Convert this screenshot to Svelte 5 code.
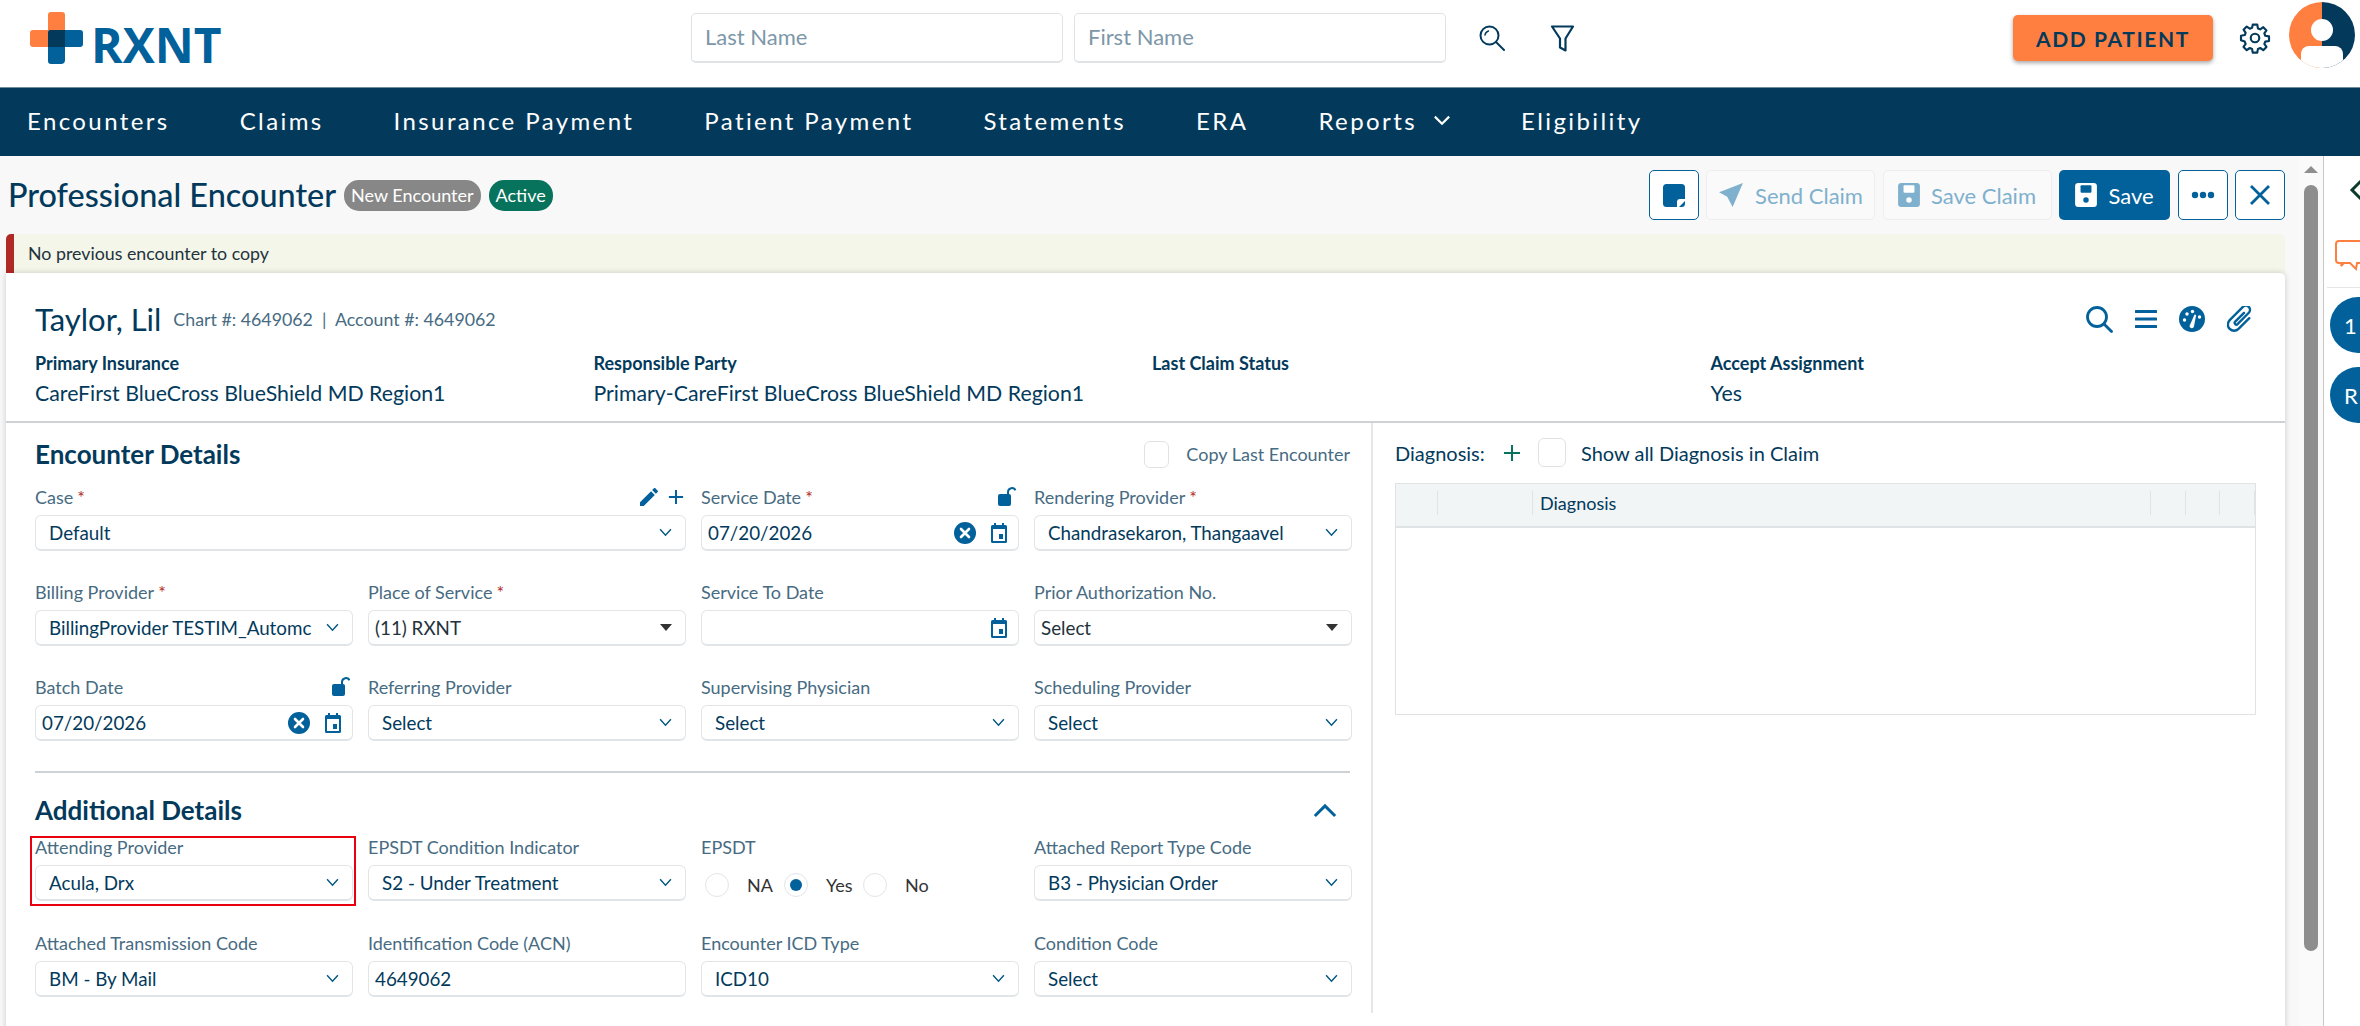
<script>
  const navItems = ['Encounters', 'Claims', 'Insurance Payment', 'Patient Payment', 'Statements', 'ERA', 'Reports', 'Eligibility'];

  const insurance = [
    { label: 'Primary Insurance', value: 'CareFirst BlueCross BlueShield MD Region1' },
    { label: 'Responsible Party', value: 'Primary-CareFirst BlueCross BlueShield MD Region1' },
    { label: 'Last Claim Status', value: '' },
    { label: 'Accept Assignment', value: 'Yes' }
  ];

  const encounterFields = [
    { label: 'Case', req: true, value: 'Default', kind: 'select', span: 2, tools: 'case' },
    { label: 'Service Date', req: true, value: '07/20/2026', kind: 'date', clear: true, lock: true },
    { label: 'Rendering Provider', req: true, value: 'Chandrasekaron, Thangaavel', kind: 'select' },
    { label: 'Billing Provider', req: true, value: 'BillingProvider TESTIM_Automc', kind: 'select' },
    { label: 'Place of Service', req: true, value: '(11) RXNT', kind: 'native' },
    { label: 'Service To Date', value: '', kind: 'date' },
    { label: 'Prior Authorization No.', value: 'Select', kind: 'native' },
    { label: 'Batch Date', value: '07/20/2026', kind: 'date', clear: true, lock: true },
    { label: 'Referring Provider', value: 'Select', kind: 'select' },
    { label: 'Supervising Physician', value: 'Select', kind: 'select' },
    { label: 'Scheduling Provider', value: 'Select', kind: 'select' }
  ];

  const additionalFields = [
    { label: 'Attending Provider', value: 'Acula, Drx', kind: 'select', flagged: true },
    { label: 'EPSDT Condition Indicator', value: 'S2 - Under Treatment', kind: 'select' },
    { label: 'EPSDT', kind: 'radio' },
    { label: 'Attached Report Type Code', value: 'B3 - Physician Order', kind: 'select' },
    { label: 'Attached Transmission Code', value: 'BM - By Mail', kind: 'select' },
    { label: 'Identification Code (ACN)', value: '4649062', kind: 'text' },
    { label: 'Encounter ICD Type', value: 'ICD10', kind: 'select' },
    { label: 'Condition Code', value: 'Select', kind: 'select' }
  ];

  const radios = [
    { label: 'NA', on: false },
    { label: 'Yes', on: true },
    { label: 'No', on: false }
  ];
</script>

{#snippet chevron()}
  <svg class="chev" viewBox="0 0 12 8"><path d="M1 1l5 5.5L11 1" fill="none" stroke="#03577f" stroke-width="1.3" /></svg>
{/snippet}

{#snippet calendar()}
  <svg class="ico16" viewBox="0 0 16 20"><path d="M3 0h2v2h6V0h2v2h1.500A1.500 1.500 0 0 1 16 3.500v15a1.500 1.500 0 0 1-1.500 1.500h-13A1.500 1.500 0 0 1 0 18.500v-15A1.500 1.500 0 0 1 1.500 2H3z" fill="#02619b" /><rect x="2" y="6" width="12" height="12" fill="#fff" /><rect x="8" y="11" width="4" height="5" fill="#02619b" /></svg>
{/snippet}

{#snippet clearIcon()}
  <svg class="ico22" viewBox="0 0 22 22"><circle cx="11" cy="11" r="11" fill="#02619b" /><path d="M7 7l8 8M15 7l-8 8" stroke="#fff" stroke-width="2.600" stroke-linecap="round" /></svg>
{/snippet}

{#snippet lock()}
  <svg class="lock" viewBox="0 0 18 20"><path d="M10 7V5a4 4 0 0 1 7.500-1.800" fill="none" stroke="#02619b" stroke-width="2" /><rect x="0" y="7" width="13" height="12" rx="2" fill="#02619b" /></svg>
{/snippet}

{#snippet field(f)}
  <div class="field" class:span2={f.span === 2} class:flagged={f.flagged}>
    <div class="label">
      <span>{f.label}{#if f.req}<em>*</em>{/if}</span>
      {#if f.lock}{@render lock()}{/if}
      {#if f.tools === 'case'}
        <span class="case-tools">
          <svg width="20" height="20" viewBox="2 2 20 20"><path fill="#02619b" d="M20.710 7.040c.39-.39.39-1.040 0-1.410l-2.340-2.340c-.37-.39-1.020-.39-1.410 0l-1.840 1.830 3.750 3.750M3 17.250V21h3.750L17.810 9.930l-3.750-3.750L3 17.250z" /></svg>
          <svg width="16" height="16" viewBox="0 0 18 18"><path d="M9 1v16M1 9h16" stroke="#02619b" stroke-width="2.200" /></svg>
        </span>
      {/if}
    </div>
    {#if f.kind === 'radio'}
      <div class="radios">
        {#each radios as r}
          <div class="radio-item">
            <span class="radio" class:on={r.on}></span>
            <span class="radio-label">{r.label}</span>
          </div>
        {/each}
      </div>
    {:else}
      <div class="box {f.kind}">
        <span class="val">{f.value}</span>
        {#if f.kind === 'select'}{@render chevron()}{/if}
        {#if f.kind === 'native'}<span class="caret"></span>{/if}
        {#if f.kind === 'date'}
          {#if f.clear}{@render clearIcon()}{/if}
          {@render calendar()}
        {/if}
      </div>
    {/if}
  </div>
{/snippet}

<div class="page">
  <header class="top">
    <div class="logo">
      <svg width="53" height="52" viewBox="0 0 53 52">
        <path d="M18 3a3 3 0 0 1 3-3h11a3 3 0 0 1 3 3v32H3a3 3 0 0 1-3-3V21a3 3 0 0 1 3-3h15z" fill="#ff7f41" />
        <path d="M18 21a3 3 0 0 1 3-3h29a3 3 0 0 1 3 3v11a3 3 0 0 1-3 3H35v13a4 4 0 0 1-4 4H21a3 3 0 0 1-3-3z" fill="#02619b" />
        <path d="M18 21a3 3 0 0 1 3-3h14v17H18z" fill="#033a5c" />
      </svg>
      <span class="logo-text">RXNT</span>
    </div>
    <div class="search">
      <div class="search-input">Last Name</div>
      <div class="search-input">First Name</div>
      <svg class="s-icon" width="26" height="26" viewBox="0 0 26 26" fill="none" stroke="#033a5c" stroke-width="2" stroke-linecap="round"><circle cx="10.500" cy="10.500" r="9" /><path d="M17 17l8 8" /><path d="M6 10a5 5 0 0 1 3.500-4" stroke-width="1.500" /></svg>
      <svg class="f-icon" width="25" height="29" viewBox="0 0 25 29" fill="none" stroke="#033a5c" stroke-width="2.200" stroke-linejoin="round"><path d="M2 2.500h21l-7.500 12v12l-5.500-3v-9z" /></svg>
    </div>
    <div class="top-right">
      <button class="add">ADD PATIENT</button>
      <svg class="gear" width="32" height="32" viewBox="0 0 24 24" fill="none" stroke="#033a5c" stroke-width="1.600" stroke-linejoin="round"><circle cx="12" cy="12" r="3.200" /><path d="M10.300 2h3.400l.5 2.800 1.700.7 2.300-1.600 2.400 2.400-1.600 2.300.7 1.700 2.800.5v3.400l-2.800.5-.7 1.700 1.600 2.300-2.400 2.400-2.300-1.600-1.700.7-.5 2.800h-3.400l-.5-2.800-1.700-.7-2.300 1.600-2.400-2.400 1.600-2.300-.7-1.700L1.500 13.700v-3.400l2.800-.5.7-1.700L3.400 5.800l2.400-2.400 2.300 1.600 1.700-.7z" /></svg>
      <svg class="avatar" width="66" height="66" viewBox="0 0 66 66">
        <defs><clipPath id="av"><circle cx="33" cy="33" r="33" /></clipPath></defs>
        <g clip-path="url(#av)">
          <rect width="33" height="66" fill="#ff7f41" />
          <rect x="33" width="33" height="66" fill="#033a5c" />
          <circle cx="33" cy="28" r="11" fill="#fff" />
          <path d="M12 66V52a8 8 0 0 1 8-8h26a8 8 0 0 1 8 8v14z" fill="#fff" />
        </g>
      </svg>
    </div>
  </header>

  <nav class="nav">
    {#each navItems as item}
      <span class="nav-item">
        {item}
        {#if item === 'Reports'}
          <svg width="18" height="11" viewBox="0 0 16 10"><path d="M1.500 1.500L8 8l6.500-6.500" fill="none" stroke="#fff" stroke-width="2" /></svg>
        {/if}
      </span>
    {/each}
  </nav>

  <div class="body">
    <main class="content">
      <div class="title-row">
        <h1>Professional Encounter</h1>
        <span class="badge grey">New Encounter</span>
        <span class="badge green">Active</span>
        <div class="actions">
          <button class="btn outline icon-only">
            <svg width="22" height="23" viewBox="0 0 22 23"><rect width="22" height="23" rx="3.500" fill="#02619b" /><path d="M22 15h-5a3 3 0 0 0-3 3v5h2l6-6z" fill="#fff" /></svg>
          </button>
          <button class="btn disabled wide">
            <svg width="26" height="26" viewBox="0 0 24 24"><path d="M23 1L1 9.500l7.500 4 5 9.500z" fill="#7fb0cd" /></svg>
            Send Claim
          </button>
          <button class="btn disabled wide">
            <svg width="22" height="24" viewBox="0 0 20 22"><rect width="20" height="22" rx="3" fill="#7fb0cd" /><rect x="5" y="2" width="10" height="7" rx="1" fill="#fff" /><circle cx="10" cy="15.500" r="2.500" fill="#fff" /></svg>
            Save Claim
          </button>
          <button class="btn primary">
            <svg width="22" height="24" viewBox="0 0 20 22"><rect width="20" height="22" rx="3" fill="#fff" /><rect x="5" y="2" width="10" height="7" rx="1" fill="#02619b" /><circle cx="10" cy="15.500" r="2.500" fill="#02619b" /></svg>
            Save
          </button>
          <button class="btn outline icon-only">
            <svg width="24" height="8" viewBox="0 0 24 8"><circle cx="4" cy="4" r="3.200" fill="#02619b" /><circle cx="12" cy="4" r="3.200" fill="#02619b" /><circle cx="20" cy="4" r="3.200" fill="#02619b" /></svg>
          </button>
          <button class="btn outline icon-only">
            <svg width="22" height="22" viewBox="0 0 22 22"><path d="M2 2l18 18M20 2L2 20" stroke="#02619b" stroke-width="2.800" /></svg>
          </button>
        </div>
      </div>

      <div class="alert">No previous encounter to copy</div>

      <section class="card">
        <div class="patient">
          <div class="patient-head">
            <span class="name">Taylor, Lil</span>
            <span class="ids">Chart #: 4649062 &nbsp;|&nbsp; Account #: 4649062</span>
            <div class="patient-tools">
              <svg width="27" height="27" viewBox="0 0 27 27" fill="none" stroke="#02619b" stroke-width="2.800" stroke-linecap="round"><circle cx="11" cy="11" r="9.500" /><path d="M18 18l7.500 7.500" /></svg>
              <svg width="22" height="20" viewBox="0 0 22 20"><path d="M1 2.500h20M1 10h20M1 17.500h20" stroke="#02619b" stroke-width="3" stroke-linecap="round" /></svg>
              <svg width="26" height="26" viewBox="0 0 26 26"><circle cx="13" cy="13" r="13" fill="#02619b" /><circle cx="5.500" cy="14" r="1.700" fill="#fff" /><circle cx="8" cy="8" r="1.700" fill="#fff" /><circle cx="13.500" cy="5.500" r="1.700" fill="#fff" /><circle cx="20.500" cy="11" r="1.700" fill="#fff" /><path d="M10.500 20l5-11.500 1.600.6L15 20.500a2.300 2.300 0 0 1-4.500-.5z" fill="#fff" /></svg>
              <svg width="25" height="27" viewBox="3.500 4 18 19.500" fill="none"><path transform="rotate(45 12.500 13.500)" d="M17 8v11a4.500 4.500 0 0 1-9 0V5.500a3 3 0 0 1 6 0V17a1.200 1.200 0 0 1-2.400 0V8" stroke="#02619b" stroke-width="1.700" stroke-linecap="round" /></svg>
            </div>
          </div>
          <div class="insurance">
            {#each insurance as item}
              <div>
                <div class="ins-label">{item.label}</div>
                <div class="ins-value">{item.value}</div>
              </div>
            {/each}
          </div>
        </div>

        <div class="split">
          <div class="left">
            <div class="section-head">
              <h2>Encounter Details</h2>
              <label class="check">
                <span class="checkbox"></span>
                <span>Copy Last Encounter</span>
              </label>
            </div>
            <div class="grid">
              {#each encounterFields as f}
                {@render field(f)}
              {/each}
            </div>
            <hr />
            <div class="section-head additional">
              <h2>Additional Details</h2>
              <svg class="collapse" width="24" height="15" viewBox="0 0 26 16"><path d="M2 14L13 3l11 11" fill="none" stroke="#02619b" stroke-width="3.200" /></svg>
            </div>
            <div class="grid tight">
              {#each additionalFields as f}
                {@render field(f)}
              {/each}
            </div>
          </div>

          <div class="right">
            <div class="diag-head">
              <span class="diag-title">Diagnosis:</span>
              <svg width="18" height="18" viewBox="0 0 18 18"><path d="M9 1v16M1 9h16" stroke="#08735c" stroke-width="2" /></svg>
              <span class="checkbox"></span>
              <span class="diag-check">Show all Diagnosis in Claim</span>
            </div>
            <div class="table">
              <div class="thead">
                <span class="th c1"></span>
                <span class="th c2"></span>
                <span class="th c3">Diagnosis</span>
                <span class="th c4"></span>
                <span class="th c4"></span>
                <span class="th c4"></span>
              </div>
            </div>
          </div>
        </div>
      </section>
    </main>

    <div class="scrollbar">
      <span class="arrow"></span>
      <span class="thumb"></span>
    </div>

    <aside class="side">
      <svg class="side-chev" width="14" height="22" viewBox="0 0 14 22"><path d="M12 2L3 11l9 9" fill="none" stroke="#0b3a2a" stroke-width="3" /></svg>
      <svg class="side-chat" width="40" height="34" viewBox="0 0 40 34"><path d="M4 1h36v22H22l-1 6-6-6H9l-3 3 1-3H4a3 3 0 0 1-3-3V4a3 3 0 0 1 3-3z" fill="none" stroke="#ff7f41" stroke-width="2" /></svg>
      <div class="side-rule"></div>
      <div class="bubble">1</div>
      <div class="bubble">R</div>
    </aside>
  </div>
</div>

<style>
  :global(body) {
    margin: 0;
    background: #f8f8f8;
    font-family: Lato, "Noto Sans", sans-serif;
    color: #033a5c;
  }

  .page {
    width: 2360px;
    height: 1026px;
    overflow: hidden;
    display: flex;
    flex-direction: column;
  }

  .top {
    height: 87px;
    flex: none;
    box-sizing: border-box;
    padding-bottom: 11px;
    background: #fff;
    display: flex;
    align-items: center;
  }

  .logo {
    display: flex;
    align-items: flex-end;
    gap: 8px;
    margin-left: 30px;
    width: 661px;
  }

  .logo-text {
    font-family: "Open Sans", sans-serif;
    font-weight: 700;
    font-size: 48px;
    color: #02619b;
    line-height: 34px;
    margin-bottom: 2px;
  }

  .search {
    display: flex;
    align-items: center;
  }

  .search-input {
    width: 372px;
    height: 50px;
    box-sizing: border-box;
    margin-right: 11px;
    border: 1px solid #dfe3e6;
    border-bottom-width: 2px;
    border-radius: 5px;
    padding: 0 13px 2px;
    display: flex;
    align-items: center;
    font-size: 22px;
    color: #7d97a8;
  }

  .s-icon { margin-left: 22px; }
  .f-icon { margin-left: 45px; }

  .top-right {
    margin-left: auto;
    display: flex;
    align-items: center;
    padding-right: 5px;
  }

  .add {
    width: 200px;
    height: 46px;
    border: none;
    border-radius: 5px;
    background: #ff7f41;
    color: #033a5c;
    font-family: inherit;
    font-weight: 700;
    font-size: 21px;
    letter-spacing: 1.600px;
    box-shadow: 0 2px 4px rgba(0, 0, 0, 0.35);
  }

  .gear { margin: 0 18px 0 26px; }

  .avatar { margin-top: -6px; }

  .nav {
    height: 69px;
    flex: none;
    box-sizing: border-box;
    padding: 0 0 3px 27px;
    background: #033a5c;
    border-top: 1px solid #6f8b9c;
    display: flex;
    align-items: center;
    gap: 70px;
  }

  .nav-item {
    color: #fff;
    font-size: 24px;
    letter-spacing: 2.400px;
    display: flex;
    align-items: center;
    gap: 16px;
  }

  .body {
    flex: 1;
    display: flex;
    min-height: 0;
  }

  .content {
    width: 2299px;
    flex: none;
    padding: 14px 14px 0 6px;
    box-sizing: border-box;
  }

  .title-row {
    height: 50px;
    display: flex;
    align-items: center;
    gap: 8px;
    padding-left: 2px;
  }

  h1 {
    margin: -2px 0 0 0;
    font-size: 32.400px;
    font-weight: 500;
    color: #033a5c;
  }

  .badge {
    height: 31px;
    border-radius: 15px;
    padding: 0 7px;
    display: flex;
    align-items: center;
    color: #fff;
    font-size: 18px;
  }

  .grey { background: #878787; }
  .green { background: #08735c; }

  .actions {
    margin-left: auto;
    display: flex;
    gap: 7.500px;
  }

  .btn {
    height: 50px;
    border-radius: 5px;
    box-sizing: border-box;
    display: flex;
    align-items: center;
    justify-content: center;
    gap: 11px;
    font-family: inherit;
    font-size: 22px;
    padding: 0;
  }

  .icon-only {
    width: 50px;
  }

  .outline {
    background: #fff;
    border: 1px solid #02619b;
  }

  .disabled {
    background: #fafafa;
    border: 1px solid #eee;
    color: #7fb0cd;
  }

  .wide { width: 169px; }

  .primary {
    width: 111px;
    background: #02619b;
    border: none;
    color: #fff;
  }

  .alert {
    margin-top: 14px;
    height: 39px;
    box-sizing: border-box;
    padding: 0 0 2px 14px;
    background: #f4f6ea;
    border-left: 8px solid #b02a25;
    border-radius: 5px 5px 0 0;
    display: flex;
    align-items: center;
    font-size: 17.800px;
    color: #23323b;
  }

  .card {
    background: #fff;
    border-radius: 0 5px 0 0;
    box-shadow: 0 0 6px rgba(0, 0, 0, 0.18);
    height: 760px;
  }

  .patient {
    height: 150px;
    box-sizing: border-box;
    padding: 26px 33px 0 29px;
    border-bottom: 2px solid #cfd2d4;
  }

  .patient-head {
    display: flex;
    align-items: center;
    height: 40px;
    gap: 12px;
  }

  .name {
    font-size: 31px;
    color: #033a5c;
  }

  .ids {
    font-size: 17.800px;
    color: #476b82;
  }

  .patient-tools {
    margin-left: auto;
    display: flex;
    align-items: center;
    gap: 22px;
  }

  .insurance {
    display: grid;
    grid-template-columns: repeat(4, 558.500px);
    margin-top: 12px;
  }

  .ins-label {
    font-size: 18px;
    font-weight: 700;
    line-height: 24px;
  }

  .ins-value {
    font-size: 21.300px;
    line-height: 26px;
    margin-top: 5px;
  }

  .split {
    display: flex;
    height: 590px;
  }

  .left {
    width: 1367px;
    box-sizing: border-box;
    padding: 0 21px 0 29px;
    border-right: 2px solid #e4e6e7;
  }

  .section-head {
    height: 59px;
    box-sizing: border-box;
    padding-top: 3px;
    display: flex;
    align-items: center;
    justify-content: space-between;
  }

  h2 {
    margin: 0;
    font-size: 26px;
    font-weight: 700;
    color: #033a5c;
  }

  .check {
    display: flex;
    align-items: center;
    gap: 17px;
    font-size: 18px;
    color: #476b82;
  }

  .checkbox {
    width: 25px;
    height: 27px;
    box-sizing: border-box;
    border: 1px solid #e0e3e5;
    border-radius: 6px;
    background: #fff;
    display: block;
  }

  .grid {
    display: grid;
    grid-template-columns: repeat(4, 318px);
    column-gap: 15px;
    row-gap: 26px;
  }

  .grid.tight { row-gap: 27px; }

  .span2 { grid-column: span 2; }

  .field {
    position: relative;
  }

  .flagged::after {
    content: '';
    position: absolute;
    left: -5px;
    right: -3px;
    top: 4px;
    bottom: -5px;
    border: 2px solid #e8000f;
    pointer-events: none;
  }

  .label {
    height: 30px;
    margin-bottom: 3px;
    display: flex;
    align-items: center;
    justify-content: space-between;
    font-size: 18px;
    color: #476b82;
  }

  .label em {
    color: #b02a25;
    font-style: normal;
    margin-left: 4px;
  }

  .case-tools {
    display: flex;
    align-items: center;
    gap: 9px;
    margin-right: 2px;
  }

  .lock {
    width: 18px;
    height: 20px;
    margin-right: 3px;
  }

  .box {
    height: 36px;
    box-sizing: border-box;
    border: 1px solid #e2e5e7;
    border-bottom-width: 2px;
    border-radius: 6px;
    background: #fff;
    display: flex;
    align-items: center;
    gap: 8px;
    padding: 0 13px 0 13px;
    font-size: 18.800px;
    color: #033a5c;
  }

  .val {
    flex: 1;
    white-space: nowrap;
    overflow: hidden;
  }

  .box.date,
  .box.native,
  .box.text {
    padding-left: 6px;
  }

  .box.native .val {
    color: #23323b;
  }

  .box.date { padding-right: 11px; }

  .chev {
    width: 13px;
    height: 9px;
    flex: none;
  }

  .caret {
    width: 0;
    height: 0;
    border-left: 6px solid transparent;
    border-right: 6px solid transparent;
    border-top: 7px solid #333;
  }

  .ico16 {
    width: 16px;
    height: 20px;
    flex: none;
  }

  .ico22 {
    width: 22px;
    height: 22px;
    flex: none;
    margin-right: 7px;
  }

  hr {
    margin: 30px 0 0;
    border: none;
    border-top: 2px solid #cfd2d4;
  }

  .additional {
    height: 44px;
    margin-top: 15px;
    padding-top: 0;
  }

  .collapse { margin-right: 13px; }

  .radios {
    height: 36px;
    box-sizing: border-box;
    padding: 4px 0 0 4px;
    display: flex;
    align-items: center;
  }

  .radio-item {
    width: 79px;
    display: flex;
    align-items: center;
    gap: 18px;
  }

  .radio {
    width: 24px;
    height: 24px;
    box-sizing: border-box;
    border: 1px solid #e2e5e7;
    border-radius: 50%;
    background: #fff;
    position: relative;
    flex: none;
  }

  .radio.on::after {
    content: '';
    position: absolute;
    inset: 5px;
    border-radius: 50%;
    background: #02619b;
  }

  .radio-label {
    font-size: 18px;
    color: #333;
  }

  .right {
    flex: 1;
    padding: 0 30px 0 22px;
  }

  .diag-head {
    height: 59px;
    display: flex;
    align-items: center;
  }

  .diag-title {
    font-size: 20px;
    width: 108px;
  }

  .diag-head .checkbox {
    width: 28px;
    height: 29px;
    margin: 0 15px 0 17px;
  }

  .diag-check {
    font-size: 20px;
  }

  .table {
    height: 232px;
    box-sizing: border-box;
    border: 1px solid #e0e3e5;
    margin-top: 1px;
  }

  .thead {
    height: 44px;
    box-sizing: border-box;
    padding-bottom: 4px;
    background: #f1f5f6;
    border-bottom: 2px solid #e0e3e5;
    display: flex;
    align-items: center;
  }

  .th {
    height: 24px;
    border-right: 1px solid #dfe4e6;
    box-sizing: border-box;
    display: flex;
    align-items: center;
    font-size: 18px;
  }

  .c1 { width: 42px; }
  .c2 { width: 95px; }
  .c3 { width: 618px; padding-left: 7px; }
  .c4 { width: 34.500px; }

  .scrollbar {
    width: 24px;
    flex: none;
    background: #fafafa;
    border-right: 1px solid #c8c8c8;
    display: flex;
    flex-direction: column;
    align-items: center;
  }

  .arrow {
    margin-top: 10px;
    width: 0;
    height: 0;
    border-left: 7px solid transparent;
    border-right: 7px solid transparent;
    border-bottom: 7px solid #8e8e8e;
  }

  .thumb {
    margin-top: 12px;
    width: 14px;
    height: 766px;
    border-radius: 7px;
    background: #8e8e8e;
  }

  .side {
    flex: 1;
    min-width: 0;
    overflow: hidden;
    background: #fff;
    display: flex;
    flex-direction: column;
  }

  .side-chev {
    margin: 23px 0 0 25px;
    flex: none;
  }

  .side-chat {
    margin: 39px 0 0 11px;
    flex: none;
  }

  .side-rule {
    height: 1px;
    background: #e4e6e7;
    margin: 13px 0 9px 3px;
    flex: none;
  }

  .bubble {
    width: 56px;
    height: 56px;
    flex: none;
    box-sizing: border-box;
    margin: 0 0 14px 6px;
    padding-left: 14px;
    border-radius: 50%;
    background: #02619b;
    color: #fff;
    font-size: 22px;
    display: flex;
    align-items: center;
  }
</style>
